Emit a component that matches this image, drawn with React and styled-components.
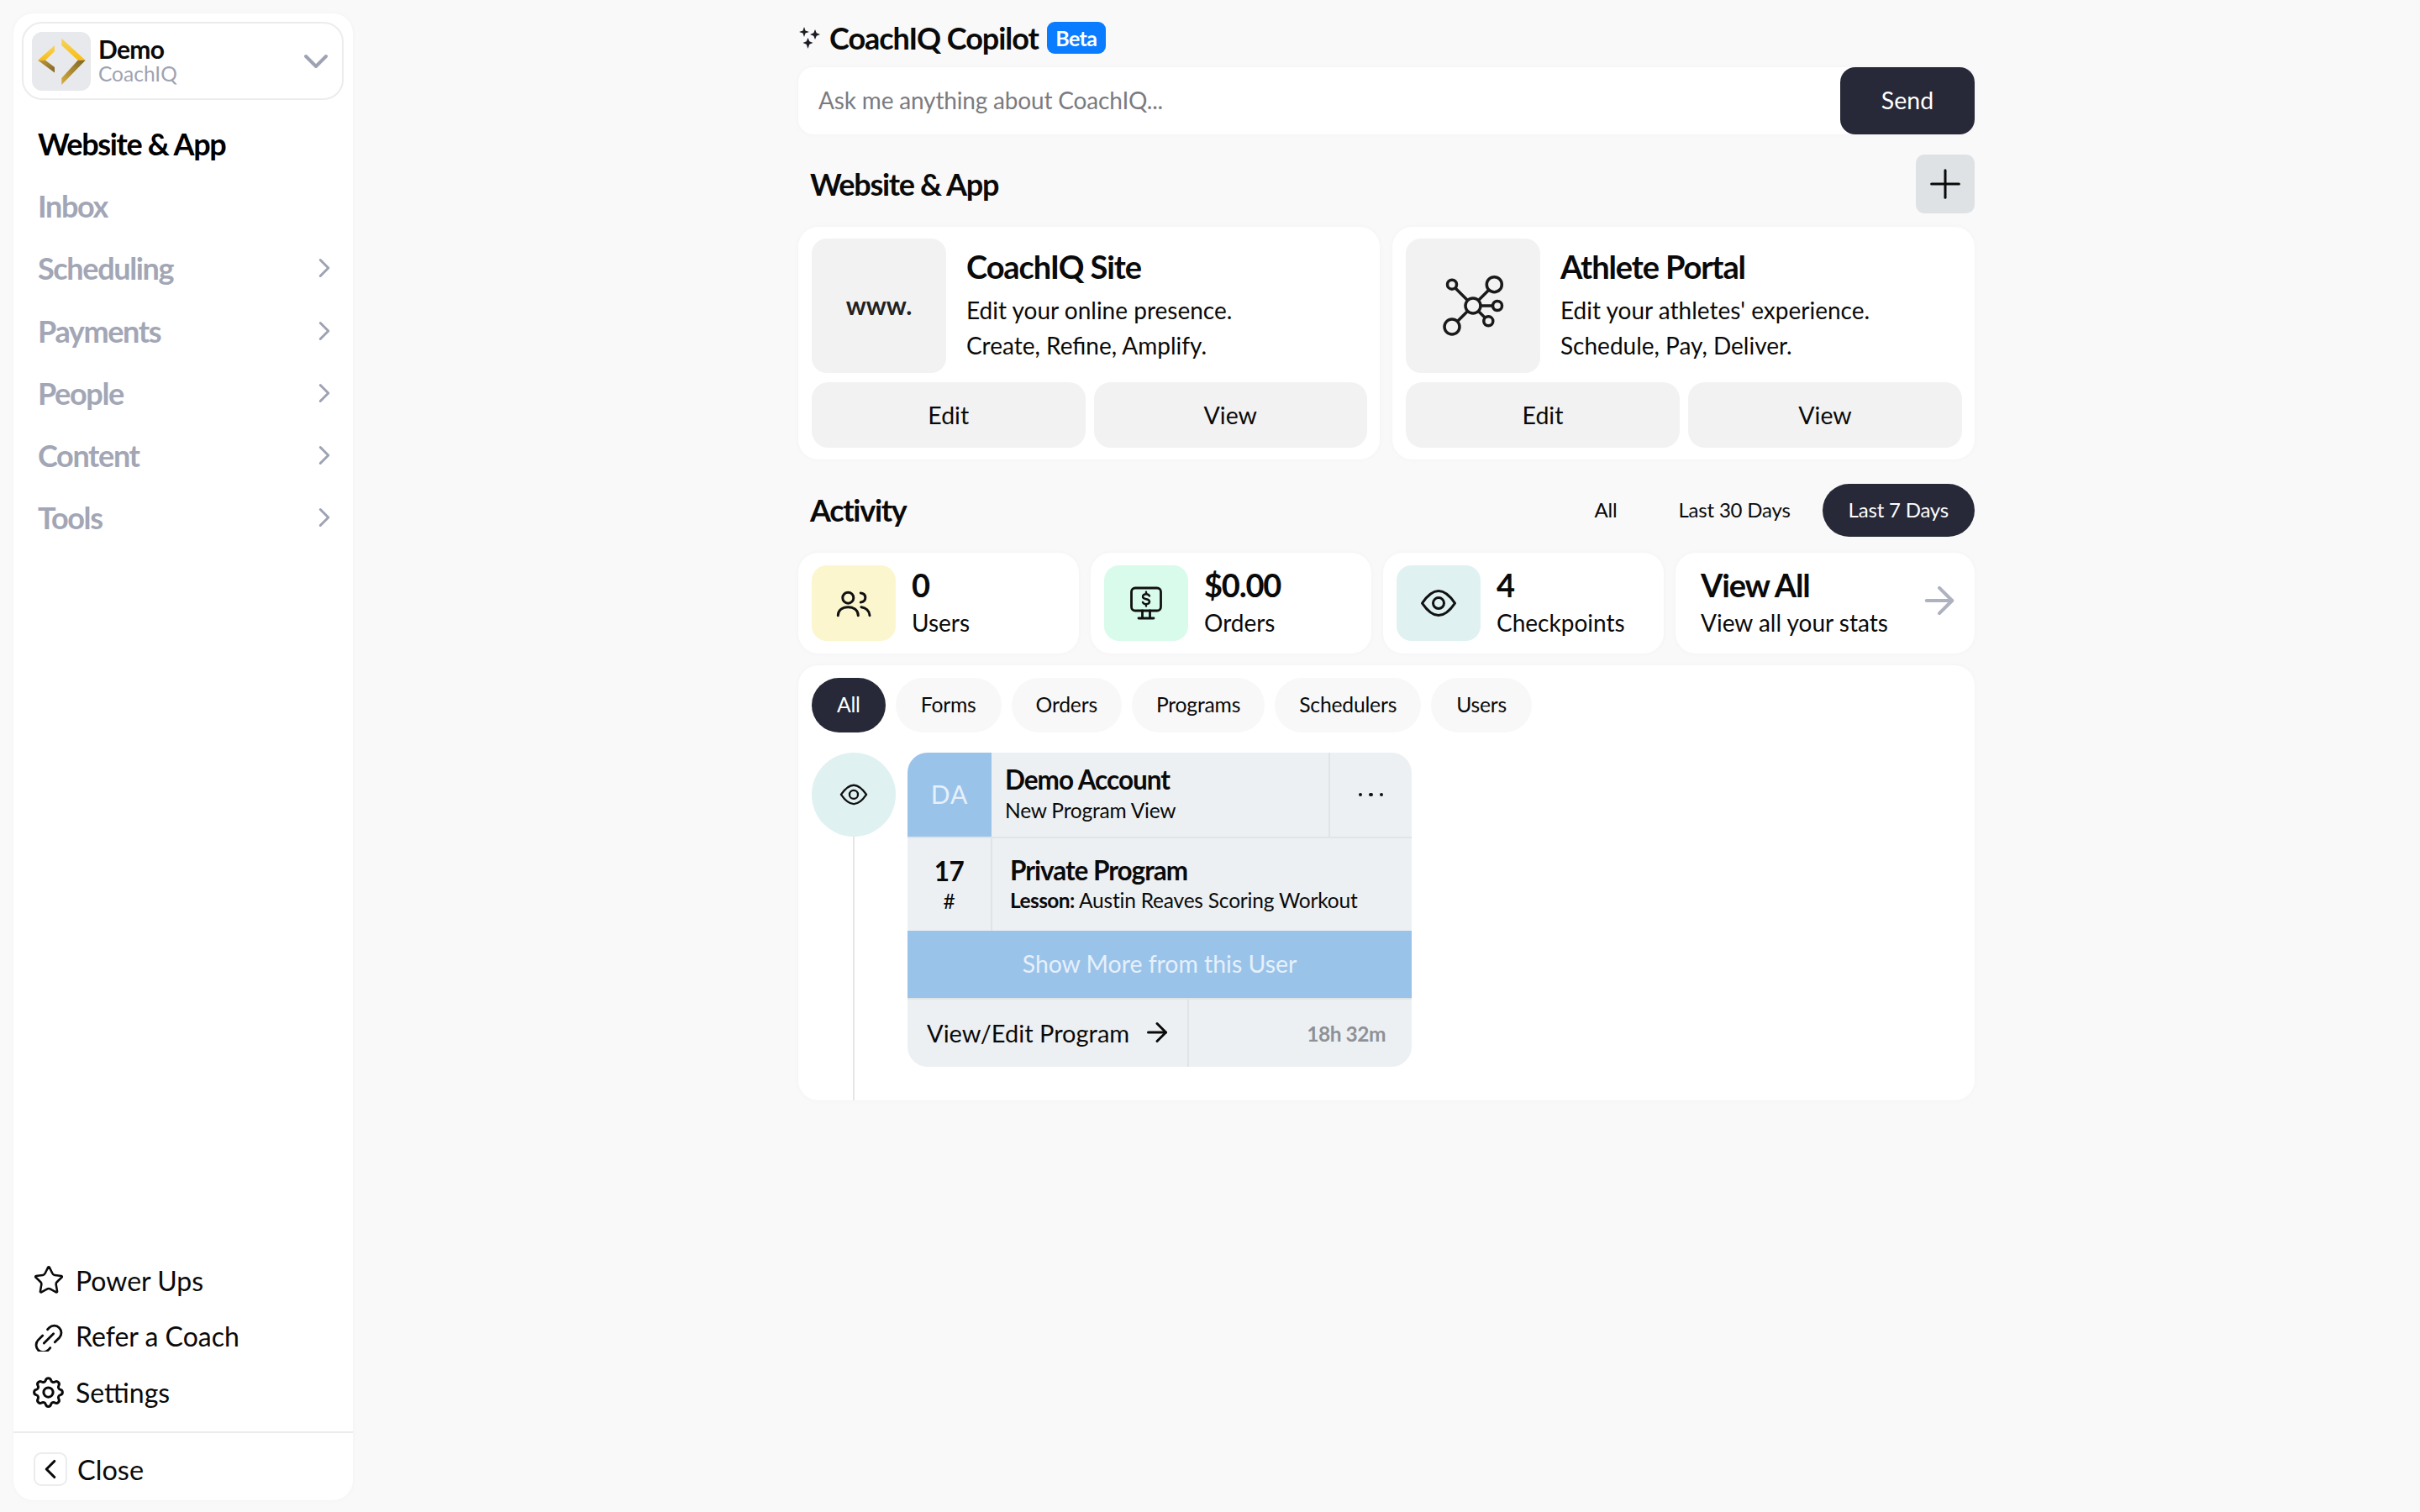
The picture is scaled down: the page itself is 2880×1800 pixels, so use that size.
import React from 'react'
import styled, { createGlobalStyle } from 'styled-components'
import { ChevronDown, ChevronRight, ChevronLeft, Plus, ArrowRight, Star } from 'lucide-react'
import { TbSettings } from 'react-icons/tb'

const GlobalStyle = createGlobalStyle`
  html, body { margin: 0; padding: 0; background: #f9f9f9; }
  body { font-family: 'Lato', 'Noto Sans', sans-serif; color: #0a0a0a; }
  * { box-sizing: border-box; }
`

const Page = styled.div`
  display: flex;
  height: 1800px;
  overflow: hidden;
`

const Sidebar = styled.aside`
  flex: none;
  width: 404px;
  height: 1770px;
  margin: 16px 0 0 16px;
  background: #fff;
  border-radius: 24px;
  box-shadow: 0 0 6px rgba(0, 0, 0, 0.03);
  display: flex;
  flex-direction: column;
`

const Switcher = styled.div`
  margin: 10px 11px 0 10px;
  height: 93px;
  border: 2px solid #ececee;
  border-radius: 24px;
  padding: 0 7px 0 10px;
  display: flex;
  align-items: center;
  gap: 9px;
`

const LogoBox = styled.div`
  width: 70px;
  height: 70px;
  border-radius: 12px;
  background: #e8e9ec;
  flex: none;
`

const SwitcherText = styled.div`
  flex: 1;
  display: flex;
  flex-direction: column;
  padding-bottom: 2px;
`

const OrgName = styled.span`
  font-size: 30px;
  line-height: 32px;
  font-weight: 700;
  letter-spacing: -0.7px;
`

const OrgSub = styled.span`
  margin-top: 1px;
  font-size: 24.5px;
  line-height: 26px;
  color: #9ea3b0;
`

const Nav = styled.nav`
  margin-top: 15px;
  padding: 0 15px 0 29px;
  display: flex;
  flex-direction: column;
`

const NavItem = styled.div`
  height: 74.2px;
  display: flex;
  align-items: center;
  justify-content: space-between;
  font-size: 36px;
  font-weight: 700;
  letter-spacing: -1.35px;
  color: ${(p) => (p.$active ? '#000' : '#a2a6b5')};
`

const BottomLinks = styled.div`
  margin-top: auto;
  padding: 0 24px 29px;
  display: flex;
  flex-direction: column;
  gap: 30.5px;
`

const BottomLink = styled.div`
  height: 36px;
  display: flex;
  align-items: center;
  gap: 15px;
  font-size: 32px;
  color: #0a0a0a;
`

const IconSlot = styled.span`
  flex: none;
  width: 35px;
  height: 36px;
  display: flex;
  align-items: center;
  justify-content: center;
`

const CloseRow = styled.div`
  height: 82px;
  border-top: 2px solid #ececee;
  padding: 6px 24px 0;
  display: flex;
  align-items: center;
  gap: 12px;
  font-size: 32.5px;
`

const CloseBox = styled.div`
  width: 40px;
  height: 40px;
  border: 2px solid #ececee;
  border-radius: 9px;
  display: flex;
  align-items: center;
  justify-content: center;
`

const Main = styled.main`
  flex: 1;
  display: flex;
  justify-content: center;
`

const Content = styled.div`
  width: 1400px;
  padding-top: 26px;
  display: flex;
  flex-direction: column;
`

const CopilotRow = styled.div`
  height: 38px;
  padding-left: 1px;
  display: flex;
  align-items: center;
  gap: 10px;
`

const CopilotTitle = styled.h1`
  margin: 0;
  font-size: 36px;
  font-weight: 700;
  letter-spacing: -1.05px;
`

const Badge = styled.span`
  width: 70px;
  height: 38px;
  border-radius: 9px;
  background: #0a7cff;
  color: #fff;
  font-size: 25px;
  font-weight: 700;
  letter-spacing: -0.6px;
  display: flex;
  align-items: center;
  justify-content: center;
`

const AskBar = styled.div`
  margin-top: 16px;
  height: 80px;
  background: #fff;
  border-radius: 18px;
  box-shadow: 0 0 6px rgba(0, 0, 0, 0.03);
  display: flex;
  align-items: center;
  justify-content: space-between;
  padding-left: 24px;
`

const Placeholder = styled.span`
  padding-bottom: 2px;
  font-size: 28px;
  letter-spacing: -0.17px;
  color: #7b7b7f;
`

const SendButton = styled.div`
  width: 160px;
  height: 80px;
  padding-bottom: 3px;
  border-radius: 18px;
  background: #272938;
  color: #fff;
  font-size: 28.5px;
  display: flex;
  align-items: center;
  justify-content: center;
`

const SectionHeader = styled.div`
  margin-top: ${(p) => p.$top}px;
  height: ${(p) => p.$height}px;
  padding-left: 14px;
  display: flex;
  align-items: center;
  justify-content: space-between;
`

const SectionTitle = styled.h2`
  margin: 0;
  padding-bottom: ${(p) => p.$lift || 0}px;
  font-size: 36px;
  font-weight: 700;
  letter-spacing: -1.3px;
`

const AddButton = styled.div`
  width: 70px;
  height: 70px;
  border-radius: 10px;
  background: #dfe2e5;
  display: flex;
  align-items: center;
  justify-content: center;
`

const SiteGrid = styled.div`
  margin-top: 16px;
  display: grid;
  grid-template-columns: 692px 693px;
  gap: 15px;
`

const SiteCard = styled.div`
  height: 277px;
  background: #fff;
  border-radius: 24px;
  box-shadow: 0 0 6px rgba(0, 0, 0, 0.03);
  padding: 14px 15px 15px 16px;
  display: flex;
  flex-direction: column;
  gap: 11px;
`

const SiteTop = styled.div`
  height: 160px;
  display: flex;
  gap: 24px;
`

const SiteThumb = styled.div`
  flex: none;
  width: 160px;
  height: 160px;
  padding-bottom: ${(p) => (p.$text ? 3 : 0)}px;
  border-radius: 18px;
  background: #f2f2f2;
  display: flex;
  align-items: center;
  justify-content: center;
  font-size: 30px;
  font-weight: 700;
  color: #222;
`

const SiteText = styled.div`
  padding-top: 11px;
  display: flex;
  flex-direction: column;
`

const SiteTitle = styled.div`
  font-size: 38px;
  line-height: 44px;
  font-weight: 700;
  letter-spacing: -1.1px;
  margin-bottom: 10px;
`

const SiteLine = styled.div`
  font-size: 28px;
  line-height: 41.5px;
`

const SiteButtons = styled.div`
  display: grid;
  grid-template-columns: 1fr 1fr;
  gap: 10px;
`

const SiteButton = styled.div`
  height: 78px;
  border-radius: 20px;
  background: #f2f2f2;
  display: flex;
  align-items: center;
  justify-content: center;
  font-size: 28.5px;
`

const RangeTabs = styled.div`
  display: flex;
  align-items: center;
  gap: 3px;
`

const RangeTab = styled.div`
  height: 63px;
  padding: 0 ${(p) => p.$pad}px 2px;
  border-radius: 32px;
  display: flex;
  align-items: center;
  font-size: 24px;
  letter-spacing: -0.2px;
  background: ${(p) => (p.$active ? '#272938' : 'transparent')};
  color: ${(p) => (p.$active ? '#fff' : '#0a0a0a')};
`

const StatsRow = styled.div`
  margin-top: 19px;
  display: grid;
  grid-template-columns: 334px 334px 334px 1fr;
  gap: 14px;
`

const StatCard = styled.div`
  height: 120px;
  background: #fff;
  border-radius: 24px;
  box-shadow: 0 0 6px rgba(0, 0, 0, 0.03);
  padding: 14px 16px;
  display: flex;
  align-items: center;
  gap: 19px;
`

const StatIcon = styled.div`
  flex: none;
  width: 100px;
  height: 90px;
  border-radius: 18px;
  background: ${(p) => p.$bg};
  display: flex;
  align-items: center;
  justify-content: center;
`

const StatText = styled.div`
  flex: 1;
  display: flex;
  flex-direction: column;
`

const StatValue = styled.div`
  font-size: 38px;
  line-height: 42px;
  font-weight: 700;
  letter-spacing: -1.2px;
`

const StatLabel = styled.div`
  margin-top: 3px;
  font-size: 28px;
  line-height: 42px;
`

const ViewAllCard = styled(StatCard)`
  padding-left: 30px;
  padding-right: 16px;
  gap: 0;
  svg { margin-bottom: 6px; }
`

const Panel = styled.div`
  margin-top: 14px;
  height: 518px;
  background: #fff;
  border-radius: 24px;
  box-shadow: 0 0 6px rgba(0, 0, 0, 0.03);
  padding: 15px 16px 0;
  display: flex;
  flex-direction: column;
`

const FilterRow = styled.div`
  display: flex;
  gap: 12px;
`

const FilterPill = styled.div`
  height: 65px;
  padding: 0 ${(p) => p.$pad}px 2px;
  border-radius: 33px;
  display: flex;
  align-items: center;
  font-size: 24.7px;
  letter-spacing: -0.2px;
  background: ${(p) => (p.$active ? '#272938' : '#f8f8f8')};
  color: ${(p) => (p.$active ? '#fff' : '#0a0a0a')};
`

const Feed = styled.div`
  flex: 1;
  margin-top: 24px;
  display: flex;
  gap: 14px;
`

const Timeline = styled.div`
  flex: none;
  width: 100px;
  display: flex;
  flex-direction: column;
  align-items: center;
`

const TimelineDot = styled.div`
  flex: none;
  width: 100px;
  height: 100px;
  border-radius: 50%;
  background: #dff1f1;
  display: flex;
  align-items: center;
  justify-content: center;
`

const TimelineLine = styled.div`
  flex: 1;
  width: 2px;
  background: #e6e6e6;
`

const FeedCard = styled.div`
  width: 600px;
  height: 374px;
  border-radius: 24px;
  overflow: hidden;
  background: #edf0f2;
  display: flex;
  flex-direction: column;
`

const CardHead = styled.div`
  flex: none;
  height: 102px;
  border-bottom: 2px solid #e1e4e7;
  display: flex;
`

const Initials = styled.div`
  flex: none;
  width: 100px;
  padding-bottom: 2px;
  background: #9ac3ea;
  color: #e6f0fa;
  font-size: 30px;
  letter-spacing: 1px;
  display: flex;
  align-items: center;
  justify-content: center;
`

const HeadText = styled.div`
  flex: 1;
  padding: 12px 16px;
  display: flex;
  flex-direction: column;
`

const Name = styled.div`
  font-size: 31.5px;
  line-height: 41px;
  font-weight: 700;
  letter-spacing: -1px;
`

const SubLine = styled.div`
  font-size: 24.5px;
  line-height: 32px;
  letter-spacing: -0.2px;
`

const MoreCell = styled.div`
  flex: none;
  width: 99px;
  border-left: 2px solid #e1e4e7;
  display: flex;
  align-items: center;
  justify-content: center;
  gap: 8px;
`

const Dot = styled.i`
  width: 4.5px;
  height: 4.5px;
  border-radius: 50%;
  background: #111;
`

const CardBody = styled.div`
  flex: none;
  height: 110px;
  display: flex;
`

const CountCell = styled.div`
  flex: none;
  width: 101px;
  border-right: 2px solid #e1e4e7;
  padding-top: 17px;
  display: flex;
  flex-direction: column;
  align-items: center;
`

const Count = styled.div`
  font-size: 31.5px;
  line-height: 44px;
  font-weight: 700;
  letter-spacing: -0.6px;
`

const Hash = styled.div`
  font-size: 24.5px;
  line-height: 27px;
`

const ProgramText = styled.div`
  padding: 18px 0 0 21px;
  display: flex;
  flex-direction: column;
`

const LessonLine = styled.div`
  font-size: 24.5px;
  line-height: 30px;
  letter-spacing: -0.2px;
  b { font-weight: 700; letter-spacing: -0.6px; }
`

const ShowMore = styled.div`
  flex: none;
  height: 80px;
  padding-bottom: 2px;
  background: #9ac3ea;
  color: #e6f0fa;
  font-size: 28.4px;
  display: flex;
  align-items: center;
  justify-content: center;
`

const CardFoot = styled.div`
  flex: 1;
  border-top: 2px solid #e1e4e7;
  display: flex;
`

const FootLink = styled.div`
  flex: none;
  width: 335px;
  border-right: 2px solid #e1e4e7;
  padding: 0 0 2px 23px;
  display: flex;
  align-items: center;
  gap: 15px;
  font-size: 29px;
`

const FootTime = styled.div`
  flex: 1;
  padding-right: 31px;
  display: flex;
  align-items: center;
  justify-content: flex-end;
  font-size: 24.5px;
  font-weight: 700;
  letter-spacing: -0.5px;
  color: #8e9196;
`

const CoachLogo = () => (
  <svg width="70" height="70" viewBox="0 0 70 70">
    <defs>
      <linearGradient id="goldTop" x1="0" y1="0" x2="0" y2="1">
        <stop offset="0" stopColor="#f7d35c" />
        <stop offset="1" stopColor="#f9bd14" />
      </linearGradient>
      <linearGradient id="goldLeft" x1="0" y1="0" x2="1" y2="1">
        <stop offset="0" stopColor="#c39a35" />
        <stop offset="1" stopColor="#7d6428" />
      </linearGradient>
      <linearGradient id="goldRight" x1="1" y1="0" x2="0" y2="1">
        <stop offset="0" stopColor="#7d6428" />
        <stop offset="1" stopColor="#d9ae3c" />
      </linearGradient>
    </defs>
    <path d="M7 33.700 27 16v7L16 33.700z" fill="url(#goldTop)" />
    <path d="M7 33.700h9L27 42v6.500z" fill="url(#goldLeft)" />
    <path d="M35.300 7.700 63.700 33.700h-9L35.300 16z" fill="url(#goldTop)" />
    <path d="M63.700 33.700 35.300 63v-8l19.400-21.300z" fill="url(#goldRight)" />
  </svg>
)

const Sparkles = () => (
  <svg width="26" height="28" viewBox="0 0 26 28" fill="#1c1c24">
    <path d="M6 1 7.500 5.500 12 7 7.500 8.500 6 13 4.500 8.500 0 7 4.500 5.500z" />
    <path d="M19 4 20.700 8.300 25 10 20.700 11.700 19 16 17.300 11.700 13 10 17.300 8.300z" />
    <path d="M10.500 14 12.300 18.200 16.500 20 12.300 21.800 10.500 27 8.700 21.800 4.500 20 8.700 18.200z" />
  </svg>
)

const LinkIcon = () => (
  <svg width="36" height="36" viewBox="9 68 36 36" fill="none" stroke="#0a0a0a" strokeWidth="2.900" strokeLinecap="round">
    <path d="M35 93 40.500 87.500a8.700 8.700 0 0 0-12.300-12.300L26 77.500" />
    <path d="M20 85 14.500 90.500a8.700 8.700 0 0 0 12.300 12.300L29.300 100" />
    <path d="M21.700 94.300 33.300 82.700" />
  </svg>
)

const NetworkIcon = () => (
  <svg width="90" height="84" viewBox="-45 -42 90 84" fill="none" stroke="#1a1a1a" strokeWidth="3.500">
    <circle cx="0" cy="0" r="9" />
    <circle cx="25.300" cy="-25.300" r="9" />
    <circle cx="-25" cy="-25.300" r="5.500" />
    <circle cx="29" cy="0" r="5.500" />
    <circle cx="18.300" cy="18.300" r="5.500" />
    <circle cx="-25" cy="25" r="9" />
    <path d="M6.500-6.500 19-19M-6.500-6.500-21-21M9 0H23.500M6.500 6.500 14.500 14.500M-6.500 6.500-18.500 18.500" />
  </svg>
)

const UsersIcon = () => (
  <svg width="70" height="70" viewBox="0 0 70 70" fill="none" stroke="#111" strokeWidth="3" strokeLinecap="round">
    <circle cx="28.300" cy="28.700" r="6.500" />
    <path d="M16.300 49.700c0-6 5-10 12-10s12 4 12 10" />
    <path d="M43.300 23c3.500 .3 5.500 2.500 5.500 5.500s-2 5.200-5.500 5.500" />
    <path d="M44 39.700c5.500 .8 9.500 4.500 10 10" />
  </svg>
)

const OrdersIcon = () => (
  <svg width="40" height="40" viewBox="0 0 40 40" fill="none" stroke="#111" strokeWidth="2.800" strokeLinecap="round">
    <rect x="2.500" y="2" width="35" height="27" rx="4.500" />
    <path d="M15.500 29v8M24.500 29v8M11 38h18" />
    <path d="M24 11.500c-.7-1.500-2.200-2.200-4-2.200-2.300 0-4 1-4 2.900s1.800 2.600 4 3 4 1.100 4 3-1.700 2.900-4 2.900c-1.800 0-3.300-.7-4-2.200M20 6.800v2.500M20 21.100v2.400" strokeWidth="2.400" />
  </svg>
)

const EyeIcon = ({ size = 44 }) => (
  <svg width={size} height={size * 0.82} viewBox="-22 -18 44 36" fill="none" stroke="#111" strokeWidth="3">
    <path d="M-19.500 0C-13-9.500-7-14.500 0-14.500S13-9.500 19.500 0C13 9.500 7 14.500 0 14.500S-13 9.500-19.500 0Z" strokeLinejoin="round" />
    <circle cx="0" cy="0" r="6.500" />
  </svg>
)

const navItems = [
  { label: 'Website & App', active: true },
  { label: 'Inbox' },
  { label: 'Scheduling', arrow: true },
  { label: 'Payments', arrow: true },
  { label: 'People', arrow: true },
  { label: 'Content', arrow: true },
  { label: 'Tools', arrow: true },
]

const sites = [
  {
    title: 'CoachIQ Site',
    lines: ['Edit your online presence.', 'Create, Refine, Amplify.'],
    thumb: 'www.',
  },
  {
    title: 'Athlete Portal',
    lines: ["Edit your athletes' experience.", 'Schedule, Pay, Deliver.'],
    thumb: <NetworkIcon />,
  },
]

const stats = [
  { value: '0', label: 'Users', bg: '#fcf6cf', icon: <UsersIcon /> },
  { value: '$0.00', label: 'Orders', bg: '#d8fbeb', icon: <OrdersIcon /> },
  { value: '4', label: 'Checkpoints', bg: '#dff1f1', icon: <EyeIcon /> },
]

const filters = [
  { label: 'All', pad: 30, active: true },
  { label: 'Forms', pad: 30 },
  { label: 'Orders', pad: 29 },
  { label: 'Programs', pad: 29 },
  { label: 'Schedulers', pad: 29 },
  { label: 'Users', pad: 30 },
]

const App = () => {
  return (
    <Page>
      <GlobalStyle />
      <Sidebar>
        <Switcher>
          <LogoBox>
            <CoachLogo />
          </LogoBox>
          <SwitcherText>
            <OrgName>Demo</OrgName>
            <OrgSub>CoachIQ</OrgSub>
          </SwitcherText>
          <ChevronDown size={48} color="#9ea3b3" strokeWidth={2} />
        </Switcher>
        <Nav>
          {navItems.map((item) => (
            <NavItem key={item.label} $active={item.active}>
              {item.label}
              {item.arrow && <ChevronRight size={38} color="#9ea3b3" strokeWidth={1.9} />}
            </NavItem>
          ))}
        </Nav>
        <BottomLinks>
          <BottomLink>
            <IconSlot>
              <Star size={38} strokeWidth={1.6} style={{ flex: 'none' }} />
            </IconSlot>
            Power Ups
          </BottomLink>
          <BottomLink>
            <IconSlot>
              <LinkIcon />
            </IconSlot>
            Refer a Coach
          </BottomLink>
          <BottomLink>
            <IconSlot>
              <TbSettings size={45} strokeWidth={1.6} style={{ flex: 'none' }} />
            </IconSlot>
            Settings
          </BottomLink>
        </BottomLinks>
        <CloseRow>
          <CloseBox>
            <ChevronLeft size={38} strokeWidth={2} style={{ flex: 'none' }} />
          </CloseBox>
          Close
        </CloseRow>
      </Sidebar>
      <Main>
        <Content>
          <CopilotRow>
            <Sparkles />
            <CopilotTitle>CoachIQ Copilot</CopilotTitle>
            <Badge>Beta</Badge>
          </CopilotRow>
          <AskBar>
            <Placeholder>Ask me anything about CoachIQ...</Placeholder>
            <SendButton>Send</SendButton>
          </AskBar>
          <SectionHeader $top={24} $height={70}>
            <SectionTitle>Website &amp; App</SectionTitle>
            <AddButton>
              <Plus size={56} strokeWidth={1.3} />
            </AddButton>
          </SectionHeader>
          <SiteGrid>
            {sites.map((site) => (
              <SiteCard key={site.title}>
                <SiteTop>
                  <SiteThumb $text={typeof site.thumb === 'string'}>{site.thumb}</SiteThumb>
                  <SiteText>
                    <SiteTitle>{site.title}</SiteTitle>
                    {site.lines.map((line) => (
                      <SiteLine key={line}>{line}</SiteLine>
                    ))}
                  </SiteText>
                </SiteTop>
                <SiteButtons>
                  <SiteButton>Edit</SiteButton>
                  <SiteButton>View</SiteButton>
                </SiteButtons>
              </SiteCard>
            ))}
          </SiteGrid>
          <SectionHeader $top={29} $height={63}>
            <SectionTitle $lift={2}>Activity</SectionTitle>
            <RangeTabs>
              <RangeTab $pad={35}>All</RangeTab>
              <RangeTab $pad={35}>Last 30 Days</RangeTab>
              <RangeTab $pad={31} $active>
                Last 7 Days
              </RangeTab>
            </RangeTabs>
          </SectionHeader>
          <StatsRow>
            {stats.map((stat) => (
              <StatCard key={stat.label}>
                <StatIcon $bg={stat.bg}>{stat.icon}</StatIcon>
                <StatText>
                  <StatValue>{stat.value}</StatValue>
                  <StatLabel>{stat.label}</StatLabel>
                </StatText>
              </StatCard>
            ))}
            <ViewAllCard>
              <StatText>
                <StatValue>View All</StatValue>
                <StatLabel>View all your stats</StatLabel>
              </StatText>
              <ArrowRight size={52} color="#aeb2bf" strokeWidth={1.9} />
            </ViewAllCard>
          </StatsRow>
          <Panel>
            <FilterRow>
              {filters.map((f) => (
                <FilterPill key={f.label} $pad={f.pad} $active={f.active}>
                  {f.label}
                </FilterPill>
              ))}
            </FilterRow>
            <Feed>
              <Timeline>
                <TimelineDot>
                  <EyeIcon size={34} />
                </TimelineDot>
                <TimelineLine />
              </Timeline>
              <FeedCard>
                <CardHead>
                  <Initials>DA</Initials>
                  <HeadText>
                    <Name>Demo Account</Name>
                    <SubLine>New Program View</SubLine>
                  </HeadText>
                  <MoreCell>
                    <Dot />
                    <Dot />
                    <Dot />
                  </MoreCell>
                </CardHead>
                <CardBody>
                  <CountCell>
                    <Count>17</Count>
                    <Hash>#</Hash>
                  </CountCell>
                  <ProgramText>
                    <Name>Private Program</Name>
                    <LessonLine>
                      <b>Lesson:</b> Austin Reaves Scoring Workout
                    </LessonLine>
                  </ProgramText>
                </CardBody>
                <ShowMore>Show More from this User</ShowMore>
                <CardFoot>
                  <FootLink>
                    View/Edit Program
                    <ArrowRight size={36} strokeWidth={2} />
                  </FootLink>
                  <FootTime>18h 32m</FootTime>
                </CardFoot>
              </FeedCard>
            </Feed>
          </Panel>
        </Content>
      </Main>
    </Page>
  )
}

export default App
